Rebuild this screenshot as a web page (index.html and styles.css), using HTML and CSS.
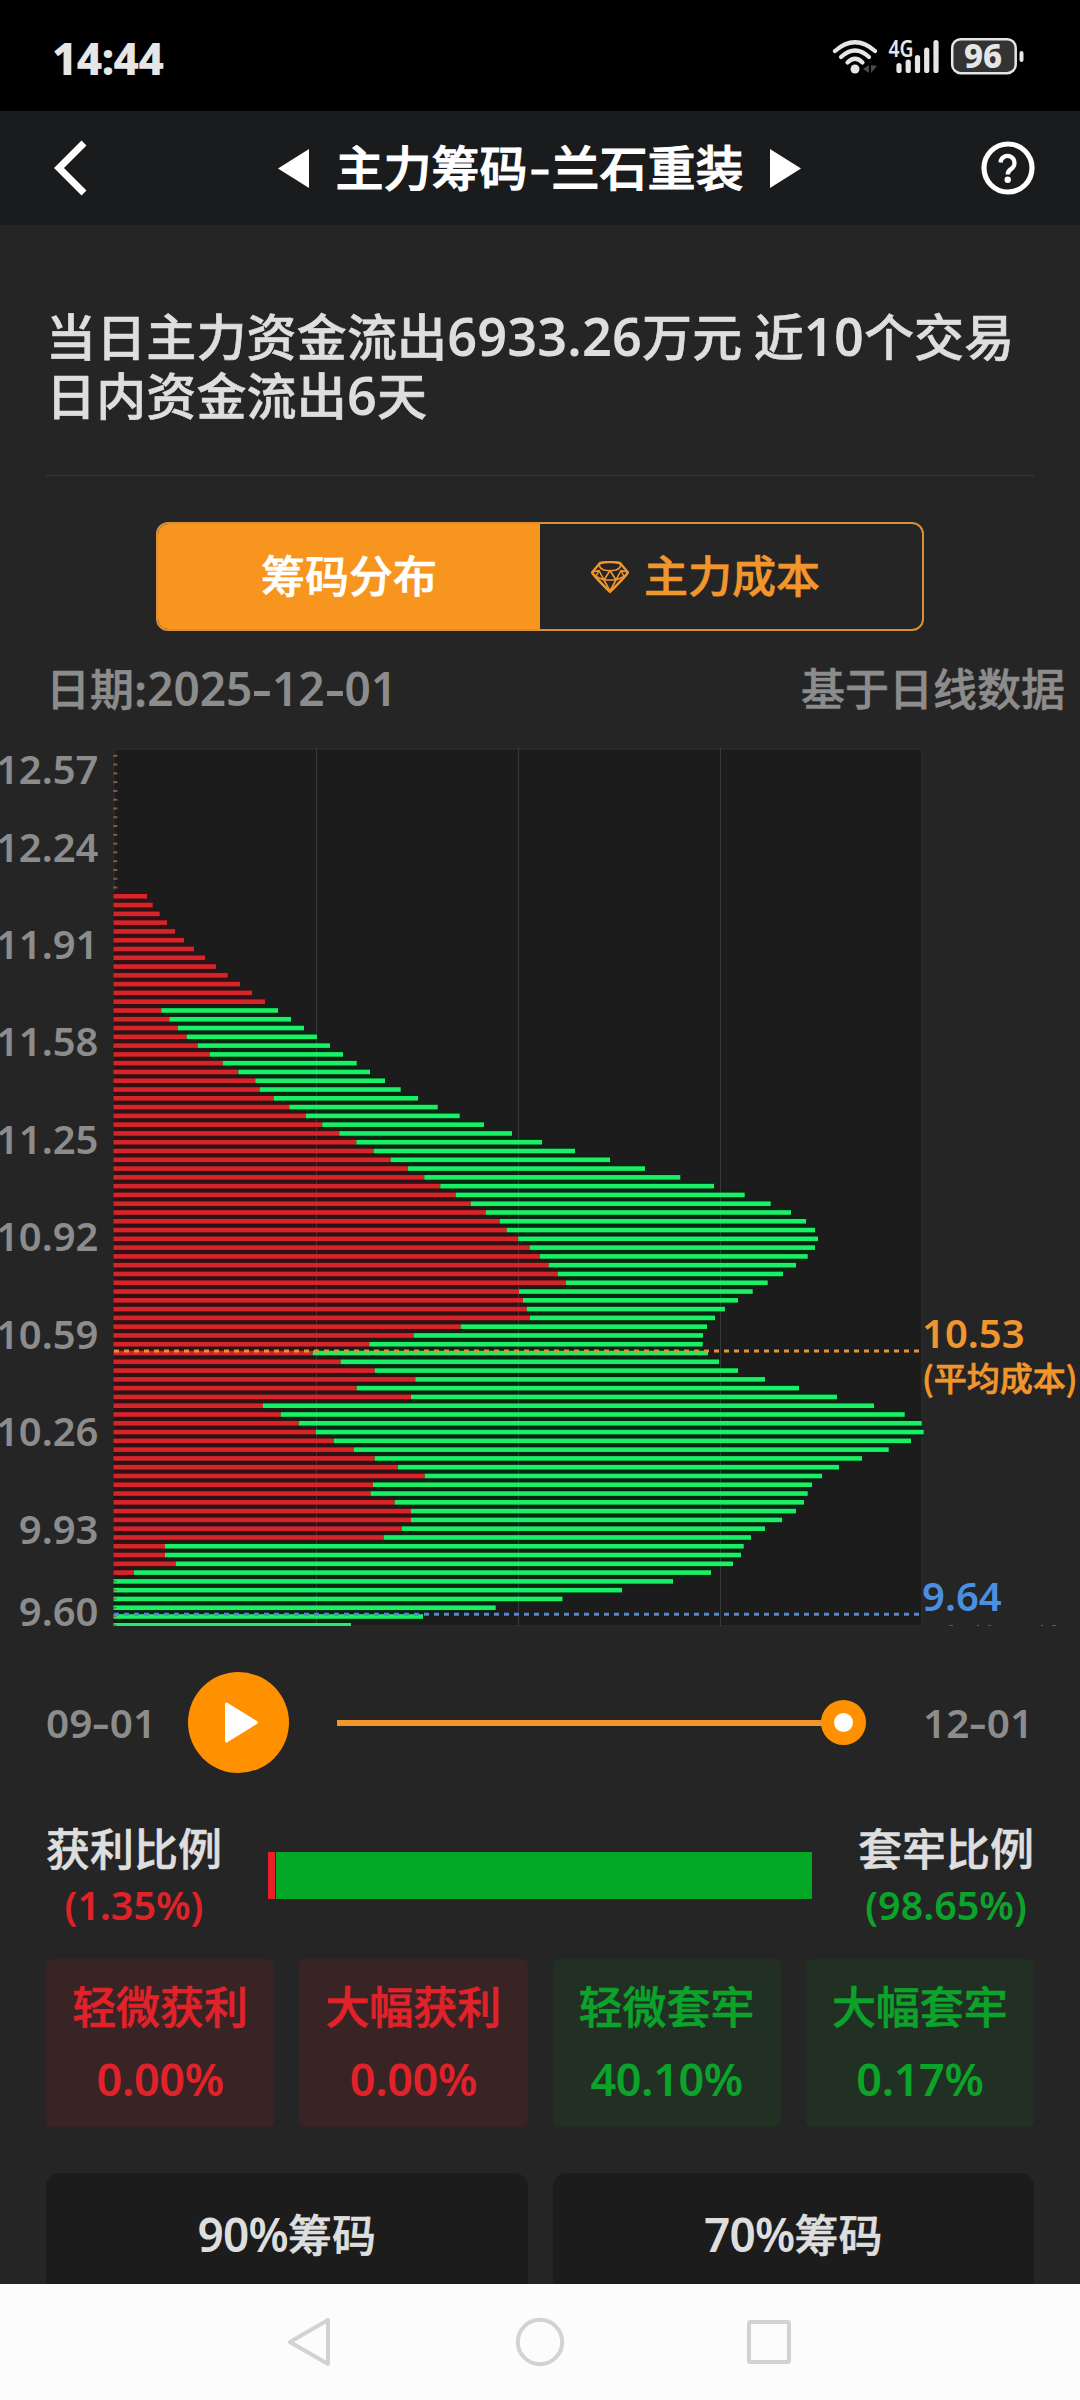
FILE: index.html
```html
<!DOCTYPE html>
<html lang="zh-CN">
<head>
<meta charset="utf-8">
<title>主力筹码-兰石重装</title>
<link rel="stylesheet" href="styles.css">
</head>
<body>
<div class="status">
  <span class="clock">14:44</span>
  <svg class="status-icons" width="196" height="44" viewBox="832 34 196 44">
    <g fill="none" stroke="#e6e6e6" stroke-width="4.2" stroke-linecap="round">
      <path d="M835 51Q855 33.500 875 51"/>
      <path d="M841 57Q855 44 869 57"/>
      <path d="M847.500 62.500Q855 55 862.500 62.500"/>
    </g>
    <circle cx="855" cy="69" r="4.500" fill="#e6e6e6"/>
    <path d="M869 65v8l-6-4zM871 65v8l6-7z" fill="#4a4a4a"/>
    <text class="net" x="888.500" y="56.500" textLength="25" lengthAdjust="spacingAndGlyphs">4G</text>
    <g stroke="#e6e6e6" stroke-width="5.200" stroke-linecap="round">
      <path d="M899 65.500v5M908.200 62v8.500M917.500 57.500v13M926.700 50v20.500M936 42.500v28"/>
    </g>
    <rect x="952.200" y="39.200" width="63.500" height="34" rx="8.500" fill="#333" stroke="#e6e6e6" stroke-width="2.500"/>
    <rect x="1019.500" y="51" width="4" height="11" rx="2" fill="#e6e6e6"/>
    <text class="batt" x="983" y="68" text-anchor="middle">96</text>
  </svg>
</div>
<header class="nav">
  <svg width="36" height="58" viewBox="0 0 36 58"><path d="M32 4L7 29L32 54" fill="none" stroke="#fff" stroke-width="7"/></svg>
  <div class="nav-title">
    <svg width="31" height="39" viewBox="0 0 31 39"><path d="M31 0v39L0 19.500z" fill="#fff"/></svg>
    <h1>主力筹码<span class="dash">-</span>兰石重装</h1>
    <svg width="31" height="39" viewBox="0 0 31 39"><path d="M0 0v39l31-19.500z" fill="#fff"/></svg>
  </div>
  <svg width="54" height="54" viewBox="0 0 54 54" fill="none" stroke="#fff">
    <circle cx="27" cy="27" r="24" stroke-width="5.200"/>
    <path d="M19.500 21.500a7 7 0 1 1 11.500 5.800c-3 2.200-4.300 3.200-4.300 6.200" stroke-width="4.200"/>
    <circle cx="26.700" cy="38.800" r="3.200" fill="#fff" stroke="none"/>
  </svg>
</header>
<main>
  <p class="headline">当日主力资金流出<span class="num">6933.26</span>万元 近<span class="num">10</span>个交易<br>日内资金流出<span class="num">6</span>天</p>
  <div class="tabs">
    <div class="tab active"><span>筹码分布</span></div>
    <div class="tab">
      <svg width="38" height="32" viewBox="0 0 38 32" fill="none" stroke="#f0962d" stroke-width="2.400" stroke-linejoin="round">
        <path d="M9 2Q19 0 29 2L37 11.500Q34 16 19 31Q4 16 1 11.500z"/>
        <path d="M9 2Q7 7 13 9Q19 10.500 25 9Q31 7 29 2M1.500 11L8 9.500L13 19L19 9.500L25 19L30 9.500L36.500 11M8 9.500L5 15.500L13 19H25L33 15.500L30 9.500M13 19L19 30L25 19" stroke-width="1.600"/>
      </svg>
      <span>主力成本</span>
    </div>
  </div>
  <div class="meta"><span>日期:<span class="num">2025<i>-</i>12<i>-</i>01</span></span><span>基于日线数据</span></div>
  <svg class="chart" id="chart" width="1080" height="890" viewBox="0 740 1080 890"></svg>
  <div class="player">
    <span class="num day">09<i>-</i>01</span>
    <svg class="play" width="101" height="101" viewBox="0 0 101 101"><circle cx="50.500" cy="50.500" r="50.500" fill="#ff9100"/><path d="M38.500 32v37l30-18.500z" fill="#fff" stroke="#fff" stroke-width="3" stroke-linejoin="round"/></svg>
    <div class="track"><i class="knob"></i></div>
    <span class="num day">12<i>-</i>01</span>
  </div>
  <div class="ratio">
    <div class="side"><b>获利比例</b><span class="num red">(1.35%)</span></div>
    <div class="bar"><i class="win"></i><i class="lose"></i></div>
    <div class="side"><b>套牢比例</b><span class="num green">(98.65%)</span></div>
  </div>
  <div class="cards">
    <div class="card red"><span>轻微获利</span><span class="num">0.00%</span></div>
    <div class="card red"><span>大幅获利</span><span class="num">0.00%</span></div>
    <div class="card green"><span>轻微套牢</span><span class="num">40.10%</span></div>
    <div class="card green"><span>大幅套牢</span><span class="num">0.17%</span></div>
  </div>
  <div class="panels">
    <div class="panel"><span class="num">90%</span>筹码</div>
    <div class="panel"><span class="num">70%</span>筹码</div>
  </div>
</main>
<footer class="sysnav">
  <svg width="504" height="50" viewBox="288 2317 504 50" fill="none" stroke="#d2d2d2" stroke-width="4" stroke-linejoin="round">
    <path d="M328 2320v44L290 2342z"/>
    <circle cx="540" cy="2342" r="22.200"/>
    <rect x="749" y="2322" width="40" height="40" rx="1.500"/>
  </svg>
</footer>
<script src="chart.js"></script>
</body>
</html>
```
FILE: styles.css
```css
* { box-sizing: border-box; }
body {
  margin: 0;
  width: 1080px;
  height: 2400px;
  display: flex;
  flex-direction: column;
  overflow: hidden;
  background: #252525;
  color: #dedede;
  font-family: "Noto Sans CJK SC", sans-serif;
  font-weight: 500;
  font-size: 44px;
  -webkit-text-stroke: .6px currentColor;
}
svg { display: block; flex: none; }
.num, .clock, .axis, .mark, .batt, .net { font-family: "Noto Sans", "Noto Sans CJK SC", sans-serif; -webkit-text-stroke: 0; }
.num { font-size: 1.045em; font-weight: 600; }
.num i { display: inline-block; width: .43em; text-align: center; font-style: normal; transform: scaleX(1.35); }

.status {
  flex: none;
  height: 111px;
  background: #000;
  display: flex;
  justify-content: space-between;
  padding: 0 52px;
}
.clock { font-weight: 800; font-size: 44px; line-height: 116px; color: #e6e6e6; letter-spacing: -.6px; }
.status-icons { margin-top: 34px; }
.net { font-weight: 600; font-size: 23px; fill: #e6e6e6; }
.batt { font-weight: 800; font-size: 33px; fill: #e6e6e6; }

.nav {
  flex: none;
  height: 114px;
  background: #1a1b1d;
  display: flex;
  align-items: center;
  justify-content: space-between;
  padding: 0 45px 0 52px;
}
.nav-title { display: flex; align-items: center; gap: 27px; padding-left: 9px; }
.nav-title h1 { margin: -6px 0 0; font-size: 48px; line-height: 60px; font-weight: 500; color: #fff; -webkit-text-stroke: 1px #fff; width: 407px; white-space: nowrap; }
.dash { display: inline-block; width: 24px; text-align: center; transform: scaleX(1.25); }

main { flex: 1; overflow: hidden; display: flex; flex-direction: column; }
.headline {
  flex: none;
  margin: 0 46px;
  padding-top: 80px;
  height: 251px;
  border-bottom: 1px solid #383838;
  font-size: 50px;
  line-height: 59px;
  letter-spacing: .15px;
  white-space: nowrap;
}
.headline .num { line-height: 1; }
.tabs {
  flex: none;
  margin: 46px 156px 0;
  height: 109px;
  display: grid;
  grid-template-columns: 1fr 1fr;
  border: 2px solid #d9903a;
  border-radius: 12px;
  overflow: hidden;
}
.tab { display: flex; align-items: center; justify-content: center; gap: 15px; padding-right: 51px; line-height: 60px; color: #f0962d; }
.tab span { margin-top: -5px; }
.tab.active { background: #f7951f; color: #fff; padding-right: 0; }
.meta { flex: none; height: 109px; display: flex; justify-content: space-between; padding: 26px 15px 0 46px; line-height: 60px; color: #8c8c8c; }

.axis { font-weight: 600; font-size: 40px; fill: #8c8c8c; text-anchor: end; }
.mark { font-weight: 600; font-size: 40px; }
.mark-note { font: 500 33px "Noto Sans CJK SC", sans-serif; stroke: #f0962d; stroke-width: .7px; }
.avg { fill: #f0962d; }
.last { fill: #4a90e2; }

.player { flex: none; height: 101px; margin: 42px 46px 0; display: flex; align-items: center; }
.day { width: 142px; font-size: 40.5px; line-height: 60px; color: #8c8c8c; white-space: nowrap; }
.track { width: 529px; height: 6px; margin: 0 57px 0 48px; background: linear-gradient(90deg, #f0962d 500px, transparent 500px); display: flex; align-items: center; justify-content: flex-end; }
.day:last-child { width: 110px; }
.knob { width: 45px; height: 45px; border-radius: 50%; border: 13px solid #ff9100; background: #fff; }

.ratio { flex: none; height: 186px; padding: 44px 46px 0; display: flex; justify-content: space-between; }
.side { width: 176px; display: flex; flex-direction: column; align-items: center; }
.side b { font-weight: 500; line-height: 60px; }
.side .num { font-size: 39.5px; line-height: 56px; }
.bar { width: 544px; height: 47px; margin-top: 35px; display: flex; gap: 1px; }
.win { width: 7px; background: #e8202a; }
.lose { flex: 1; background: #00a826; }
.red { color: #e2222a; }
.green { color: #0ca32b; }

.cards { flex: none; display: grid; grid-template-columns: repeat(4, 1fr); gap: 25px; padding: 0 46px; }
.card { height: 168px; border-radius: 6px; display: flex; flex-direction: column; align-items: center; padding-top: 16px; }
.card span { line-height: 60px; }
.card .num { font-size: 45px; line-height: 60px; margin-top: 14px; letter-spacing: -.4px; }
.card.red { background: #382424; }
.card.green { background: #223024; }

.panels { flex: none; display: grid; grid-template-columns: 1fr 1fr; gap: 25px; padding: 46px 46px 0; }
.panel { height: 130px; border-radius: 14px; background: #1c1c1c; text-align: center; line-height: 60px; padding-top: 30px; }
.panel .num { letter-spacing: -.8px; }

.sysnav { flex: none; height: 116px; background: #fcfcfc; padding: 33px 0 0 288px; }
```
FILE: chart.js
```js
// Each row: [x where the red part ends, x where the green part ends]
const rows = [
  [147,0],[152.7,0],[159.7,0],[167,0],[175,0],[184,0],[194,0],[205,0],[216,0],[227.7,0],[240,0],[252,0],[265,0],
  [161.3,278],[169.3,291],[177.7,304],[186.7,317],[197.7,330],[209.7,343],[222.7,356.7],[238.3,370],[255.3,385],
  [259.7,400.7],[273.7,418],[289.3,437.7],[305.7,459.7],[322.3,484],[339.3,512],[356.3,542],[373.7,575],[390.7,610],
  [407.7,645],[424.3,680.3],[440.3,714],[455.7,744.7],[470.7,770.7],[485.7,791],[499.7,806],[506.7,815],[518.3,818],
  [529.7,815],[539.7,807.7],[548.7,796],[557.7,783],[566,767.7],[519,752.7],[523,738],[526.7,725],[530,715],
  [460.7,707],[413.7,703],[369.3,702.7],[312.7,708],[340.7,719],[374.7,738],[415.3,765],[356.7,799],[411,837],
  [263,874],[280.7,904.7],[298.7,921.7],[316,923.7],[334,911],[353.7,888.7],[374.7,862],[398,839],[424.7,822],
  [373,812],[370.7,807.7],[394.7,804],[411,796],[411,782],[402,765],[383.7,751],[165,743.7],[165,741],[175.7,733],
  [134,711],[113.5,673],[113.5,622],[113.5,562.5],[113.5,495.7],[113.5,423],[113.5,351]
];
const LEFT = 113.5, TOP = 748.5, BOTTOM = 1626, FIRST = 896.3, STEP = 8.783;
const rect = (x, y, w, h, fill) => `<rect x="${x}" y="${y}" width="${w}" height="${h}" fill="${fill}"/>`;
const out = [];

out.push(`<clipPath id="plot"><rect x="100" y="${TOP}" width="980" height="${BOTTOM - TOP}"/></clipPath>`);
out.push(`<rect x="114" y="749" width="808" height="877" fill="#1c1c1c" stroke="#2b2b2b" stroke-width="1.500"/>`);

let tint = '', bars = '';
rows.forEach(([r, g], i) => {
  const y = FIRST + i * STEP;
  tint += rect(LEFT, y - STEP / 2, r - LEFT, STEP, '#311113');
  bars += rect(LEFT, y - 2.3, r - LEFT, 4.6, '#d6242b');
  if (g) {
    tint += rect(r, y - STEP / 2, g - r, STEP, '#07260f');
    bars += rect(r, y - 2.3, g - r, 4.6, '#1bee67');
  }
});
out.push(`<g clip-path="url(#plot)">${tint}</g>`);
[316.5, 518.5, 720.5].forEach(x => out.push(rect(x - 0.5, TOP, 1, BOTTOM - TOP, '#fff').replace('/>', ' opacity=".13"/>')));
out.push(`<g clip-path="url(#plot)">${bars}</g>`);

for (let i = 1; i <= 16; i++) out.push(rect(113.3, FIRST - i * STEP - 1, 4, 2, '#8c5a44'));
for (let i = 78; i < 84; i++) out.push(rect(114, FIRST + i * STEP - 0.7, 2.5, 1.4, '#9a5a3c'));

out.push('<path d="M114 1351H920" stroke="#e0933c" stroke-width="3" stroke-dasharray="5 5"/>');
out.push('<path d="M114 1614.300H920" stroke="#5289cf" stroke-width="3" stroke-dasharray="5 5"/>');

[['12.57', 769], ['12.24', 847], ['11.91', 944], ['11.58', 1041.5], ['11.25', 1139], ['10.92', 1236.5],
 ['10.59', 1334], ['10.26', 1431.5], ['9.93', 1529], ['9.60', 1611.5]]
  .forEach(([t, y]) => out.push(`<text class="axis" x="98.500" y="${y + 14.5}">${t}</text>`));

out.push('<text class="mark avg" x="922" y="1347.500">10.53</text>');
out.push('<text class="mark-note avg" x="922" y="1391">(平均成本)</text>');
out.push('<text class="mark last" x="922" y="1610.500">9.64</text>');
[[949, 4], [977, 2], [988, 3], [1041, 2], [1052, 4]].forEach(([x, w]) => out.push(rect(x, 1625, w, 1, '#3d6186')));

document.getElementById('chart').innerHTML = out.join('');
```
